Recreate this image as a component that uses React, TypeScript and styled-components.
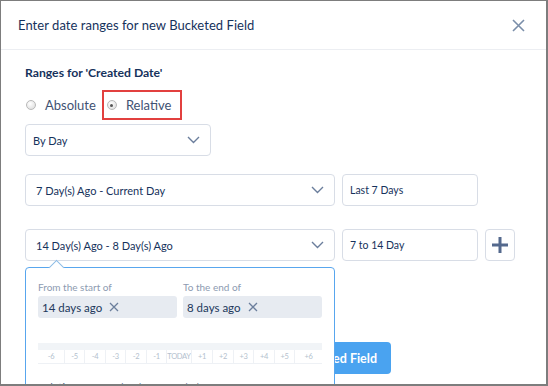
import React from "react";
import styled, { createGlobalStyle } from "styled-components";

const Global = createGlobalStyle`
  html, body { margin: 0; padding: 0; background: #fff; }
  body { font-family: Lato, "Open Sans", sans-serif; }
  * { box-sizing: border-box; }
`;

const Frame = styled.div`
  width: 548px;
  height: 386px;
  border-style: solid;
  border-color: #7d7d7d;
  border-width: 1px 2px 2px 1px;
  overflow: hidden;
  background: #fff;
  position: relative;
`;

const Header = styled.div`
  height: 49px;
  border-bottom: 1px solid #eceef2;
  display: flex;
  align-items: center;
  justify-content: space-between;
  padding: 0 21px 0 17px;
`;

const Title = styled.div`
  font-size: 13px;
  color: #16325c;
  letter-spacing: 0.05px;
`;

const Body = styled.div`
  padding: 14px 0 0 24px;
  display: flex;
  flex-direction: column;
`;

const Heading = styled.div`
  font-size: 12.2px;
  font-weight: 700;
  color: #16325c;
  line-height: 18px;
`;

const RadioRow = styled.div`
  margin-top: 8px;
  height: 30px;
  display: flex;
  align-items: center;
`;

const RadioItem = styled.label<{ $highlight?: boolean }>`
  display: flex;
  align-items: center;
  height: 30px;
  font-size: 13px;
  color: #3f5273;
  gap: 9px;
  padding: ${(p) => (p.$highlight ? "0 9px 0 3px" : "0 0 0 1px")};
  margin-left: ${(p) => (p.$highlight ? "6px" : "0")};
  border: ${(p) => (p.$highlight ? "2px solid #e2403f" : "none")};
`;

const RadioDot = styled.span<{ $checked?: boolean }>`
  width: 10px;
  height: 10px;
  border-radius: 50%;
  border: 1px solid #b9b9b9;
  background: radial-gradient(circle at 40% 35%, #ffffff 0%, #e4e4e4 70%, #d2d2d2 100%);
  position: relative;
  flex: none;
  &::after {
    content: "";
    display: ${(p) => (p.$checked ? "block" : "none")};
    position: absolute;
    left: 2.5px;
    top: 2.5px;
    width: 3px;
    height: 3px;
    border-radius: 50%;
    background: #555;
  }
`;

const Select = styled.div<{ $w: number; $pl: number; $mt: number }>`
  width: ${(p) => p.$w}px;
  height: 32px;
  margin-top: ${(p) => p.$mt}px;
  border: 1px solid #d8dde6;
  border-radius: 4px;
  display: flex;
  align-items: center;
  justify-content: space-between;
  padding: 0 10px 0 ${(p) => p.$pl}px;
  font-size: 11px;
  color: #16325c;
  background: #fff;
  flex: none;
`;

const Input = styled.div`
  width: 136px;
  height: 32px;
  border: 1px solid #d8dde6;
  border-radius: 4px;
  display: flex;
  align-items: center;
  padding-left: 7px;
  font-size: 10.5px;
  color: #16325c;
  flex: none;
`;

const PlusButton = styled.div`
  width: 30px;
  height: 32px;
  border: 1px solid #d8dde6;
  border-radius: 4px;
  display: flex;
  align-items: center;
  justify-content: center;
  flex: none;
`;

const RangeRow = styled.div<{ $mt: number }>`
  margin-top: ${(p) => p.$mt}px;
  display: flex;
  gap: 7px;
  position: relative;
`;

const Popover = styled.div`
  position: absolute;
  top: 38px;
  left: 0;
  width: 310px;
  height: 140px;
  border: 1px solid #58a6ee;
  border-radius: 4px;
  background: #fff;
  padding: 12px 12px 0 12px;
  z-index: 2;
  &::before {
    content: "";
    position: absolute;
    top: -6px;
    left: 25px;
    width: 10px;
    height: 10px;
    background: #fff;
    border-top: 1px solid #8cbbe6;
    border-left: 1px solid #8cbbe6;
    transform: rotate(45deg);
  }
`;

const Columns = styled.div`
  display: grid;
  grid-template-columns: 139px 139px;
  gap: 6px;
`;

const FieldLabel = styled.div`
  font-size: 10px;
  color: #8d9bb1;
  line-height: 14px;
  margin-bottom: 2px;
`;

const Chip = styled.div`
  height: 22px;
  background: #e7ebf1;
  border-radius: 3px;
  display: flex;
  align-items: center;
  padding-left: 4px;
  gap: 7px;
  font-size: 11.5px;
  color: #22385c;
`;

const Scale = styled.div`
  margin-top: 25px;
  width: 284px;
`;

const ScaleBand = styled.div`
  height: 7px;
  background: #f1f4f7;
`;

const ScaleCells = styled.div`
  display: flex;
  height: 14px;
  border-bottom: 1px solid #eef1f5;
`;

const Cell = styled.div<{ $w: number; $last?: boolean }>`
  width: ${(p) => p.$w}px;
  flex: none;
  border-right: ${(p) => (p.$last ? "none" : "1px solid #eef1f5")};
  font-size: 7.5px;
  color: #b4bfce;
  display: flex;
  align-items: center;
  justify-content: center;
  letter-spacing: -0.3px;
  overflow: hidden;
  white-space: nowrap;
`;

const RangeText = styled.div`
  margin-top: 17px;
  font-size: 11px;
  color: #54698d;
`;

const FooterRow = styled.div`
  margin-top: 81px;
  width: 366px;
  display: flex;
  justify-content: flex-end;
`;

const PrimaryButton = styled.div`
  height: 32px;
  padding: 0 14px;
  background: #4aa3f0;
  border-radius: 4px;
  color: #fff;
  font-size: 12.5px;
  font-weight: 700;
  display: flex;
  align-items: center;
`;

const Chevron = () => (
  <svg width="13" height="8" viewBox="0 0 13 8">
    <polyline points="1,1 6.5,6.5 12,1" fill="none" stroke="#6b7e9c" strokeWidth="1.4" />
  </svg>
);

const SmallX = () => (
  <svg width="10" height="10" viewBox="0 0 10 10">
    <path d="M1 1 L9 9 M9 1 L1 9" stroke="#6b7e9c" strokeWidth="1.3" />
  </svg>
);

const cells: [string, number][] = [
  ["-6", 27], ["-5", 20], ["-4", 21], ["-3", 20], ["-2", 21], ["-1", 20],
  ["TODAY", 25], ["+1", 21], ["+2", 21], ["+3", 20], ["+4", 21], ["+5", 20], ["+6", 27],
];

export default function App() {
  return (
    <>
      <Global />
      <Frame>
        <Header>
          <Title>Enter date ranges for new Bucketed Field</Title>
          <svg width="13" height="13" viewBox="0 0 13 13">
            <path d="M1 1 L12 12 M12 1 L1 12" stroke="#7a8ea9" strokeWidth="1.6" />
          </svg>
        </Header>
        <Body>
          <Heading>Ranges for 'Created Date'</Heading>
          <RadioRow>
            <RadioItem>
              <RadioDot />
              Absolute
            </RadioItem>
            <RadioItem $highlight>
              <RadioDot $checked />
              Relative
            </RadioItem>
          </RadioRow>
          <Select $w={186} $pl={7} $mt={4}>
            By Day
            <Chevron />
          </Select>
          <RangeRow $mt={18}>
            <Select $w={310} $pl={10} $mt={0}>
              7 Day(s) Ago - Current Day
              <Chevron />
            </Select>
            <Input>Last 7 Days</Input>
          </RangeRow>
          <RangeRow $mt={23}>
            <Select $w={310} $pl={10} $mt={0}>
              14 Day(s) Ago - 8 Day(s) Ago
              <Chevron />
            </Select>
            <Input>7 to 14 Day</Input>
            <PlusButton>
              <svg width="18" height="18" viewBox="0 0 18 18">
                <path d="M9 1 V17 M1 9 H17" stroke="#54698d" strokeWidth="3" />
              </svg>
            </PlusButton>
            <Popover>
              <Columns>
                <div>
                  <FieldLabel>From the start of</FieldLabel>
                  <Chip>
                    14 days ago
                    <SmallX />
                  </Chip>
                </div>
                <div>
                  <FieldLabel>To the end of</FieldLabel>
                  <Chip>
                    8 days ago
                    <SmallX />
                  </Chip>
                </div>
              </Columns>
              <Scale>
                <ScaleBand />
                <ScaleCells>
                  {cells.map(([t, w], i) => (
                    <Cell key={t} $w={w} $last={i === cells.length - 1}>
                      {t}
                    </Cell>
                  ))}
                </ScaleCells>
              </Scale>
              <RangeText>Relative range: 3/27/2017 - 4/2/2017</RangeText>
            </Popover>
          </RangeRow>
          <FooterRow>
            <PrimaryButton>Create Bucketed Field</PrimaryButton>
          </FooterRow>
        </Body>
      </Frame>
    </>
  );
}
